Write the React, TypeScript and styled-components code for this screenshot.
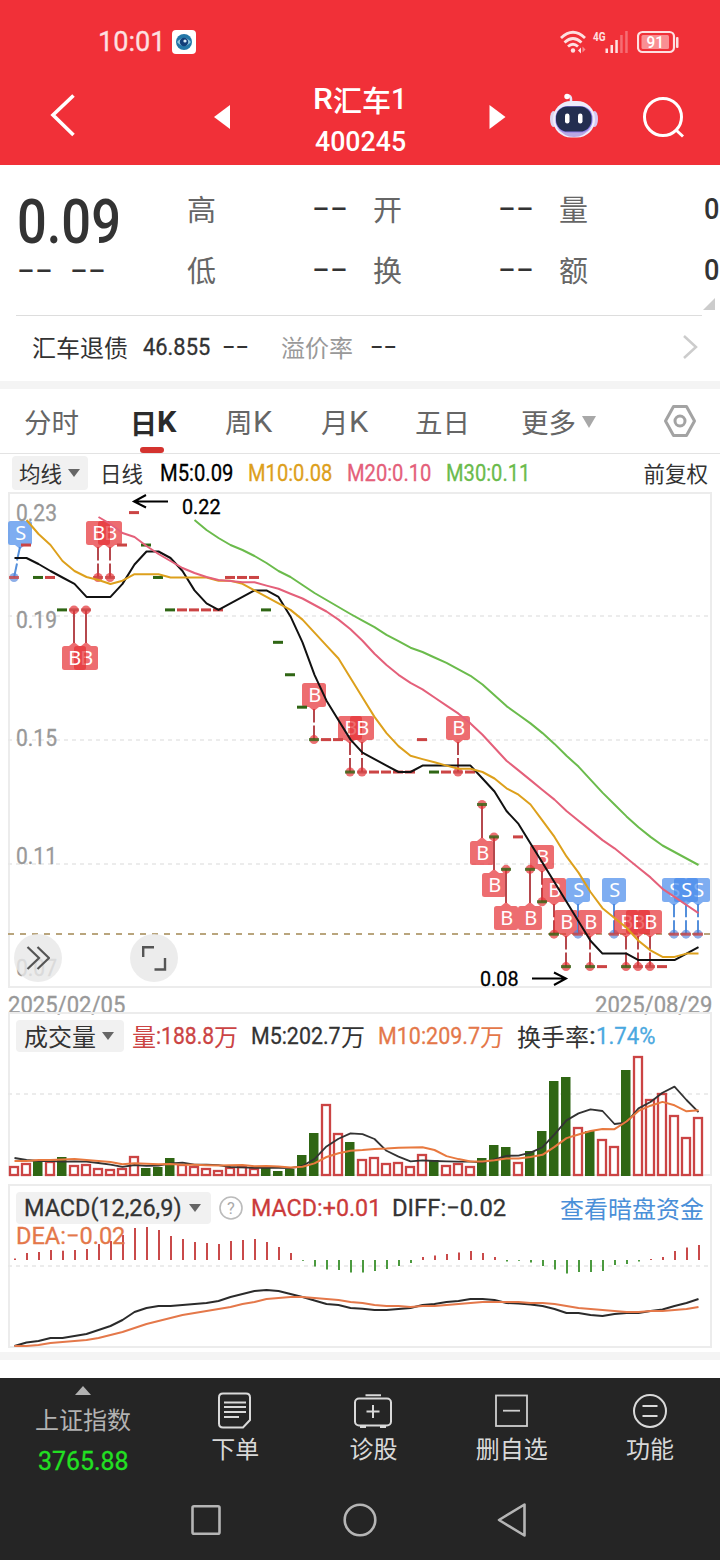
import React, { useLayoutEffect, useRef, useState } from "react";
import styled, { createGlobalStyle } from "styled-components";

const FONT = `Roboto, "Noto Sans CJK SC", sans-serif`;

const GlobalStyle = createGlobalStyle`
  html, body { margin: 0; padding: 0; background: #fff; }
  body { width: 720px; height: 1560px; overflow: hidden; font-family: ${FONT}; }
  * { box-sizing: border-box; }
  svg { display: block; }
`;

/* ---------- text primitives ---------- */

const FitBox = styled.span<{ $w: number; $size: number; $color?: string; $weight?: number }>`
  display: inline-block;
  flex: none;
  width: ${(p) => p.$w}px;
  font-size: ${(p) => p.$size}px;
  font-weight: ${(p) => p.$weight ?? 400};
  -webkit-text-stroke: ${(p) => (p.$weight ? 0 : 0.3)}px currentColor;
  color: ${(p) => p.$color ?? "inherit"};
  line-height: 1;
  white-space: nowrap;
`;

const FitInner = styled.span`
  display: inline-block;
  transform-origin: 0 50%;
`;

type FitProps = { w: number; size: number; color?: string; weight?: number; children: React.ReactNode };

/* Condenses its text horizontally so that it takes exactly w pixels. */
function Fit({ w, size, color, weight, children }: FitProps) {
  const ref = useRef<HTMLSpanElement>(null);
  const [scale, setScale] = useState(1);
  useLayoutEffect(() => {
    if (ref.current) setScale(w / ref.current.offsetWidth);
  }, [w, size]);
  return (
    <FitBox $w={w} $size={size} $color={color} $weight={weight}>
      <FitInner ref={ref} style={{ transform: `scaleX(${scale})` }}>
        {children}
      </FitInner>
    </FitBox>
  );
}

const Han = styled.span<{ $size: number; $color?: string; $weight?: number }>`
  flex: none;
  font-family: "Noto Sans CJK SC", sans-serif;
  font-size: ${(p) => p.$size}px;
  font-weight: ${(p) => p.$weight ?? 400};
  color: ${(p) => p.$color ?? "inherit"};
  line-height: 1;
  white-space: nowrap;
`;

const DashBox = styled.span<{ $w: number; $size: number }>`
  flex: none;
  width: ${(p) => p.$w}px;
  height: ${(p) => p.$size}px;
  font-family: "Liberation Sans", sans-serif;
  font-size: ${(p) => p.$size}px;
  line-height: 0.8;
  color: #333;
  white-space: nowrap;
  span {
    display: inline-block;
    transform: scaleX(1.68);
    transform-origin: 0 50%;
  }
`;

const Dashes = ({ w = 36, size = 32 }: { w?: number; size?: number }) => (
  <DashBox $w={w} $size={size}>
    <span>--</span>
  </DashBox>
);

/* ---------- layout ---------- */

const Page = styled.div`
  display: flex;
  flex-direction: column;
  width: 720px;
  height: 1560px;
  background: #fff;
  color: #333;
`;

const Header = styled.header`
  flex: none;
  height: 165px;
  background: #f13038;
  color: #fff;
`;

const StatusBar = styled.div`
  display: flex;
  justify-content: space-between;
  align-items: center;
  height: 84px;
  padding: 0 40px 0 98px;
`;

const StatusGroup = styled.div`
  display: flex;
  align-items: center;
  gap: 7px;
`;

const TitleBar = styled.div`
  display: grid;
  grid-template-columns: 210px 24px 252px 24px 38px 54px 118px;
  align-items: center;
  height: 70px;
  margin-top: -8px;
`;

const TitleText = styled.div`
  display: flex;
  flex-direction: column;
  align-items: center;
  gap: 15px;
  padding-top: 8px;
`;

const TitleLine = styled.div`
  display: flex;
  align-items: center;
  height: 30px;
`;

const BackSlot = styled.div`
  padding-left: 48px;
`;
const SearchSlot = styled.div`
  padding-left: 40px;
`;

const Quote = styled.section`
  position: relative;
  flex: none;
  display: grid;
  grid-template-columns: 187px 186px 186px 161px;
  height: 150px;
  padding-top: 14px;
`;

const PriceBlock = styled.div`
  padding: 13px 0 0 17px;
`;

const ChangeRow = styled.div`
  display: flex;
  gap: 17px;
  margin-top: 3px;
`;

const StatCol = styled.div`
  display: flex;
  flex-direction: column;
`;

const Stat = styled.div<{ $pad?: number }>`
  display: flex;
  justify-content: space-between;
  align-items: center;
  height: 61px;
  padding-right: ${(p) => p.$pad ?? 25}px;
  ${Han} {
    margin-top: -3px;
  }
`;

const Corner = styled.i`
  position: absolute;
  right: 5px;
  bottom: 5px;
  border-left: 12px solid transparent;
  border-bottom: 12px solid #ccc;
`;

const Rule = styled.div`
  flex: none;
  height: 1px;
  margin: 0 18px 0 16px;
  background: #ddd;
`;

const BondRow = styled.div`
  flex: none;
  display: flex;
  align-items: center;
  height: 65px;
  padding: 0 22px 3px 32px;
  ${Han} {
    margin-top: -1px;
  }
`;

const Space = styled.i<{ $w: number }>`
  flex: none;
  width: ${(p) => p.$w}px;
`;
const Grow = styled.i`
  flex: 1;
`;

const Band = styled.div<{ $h: number }>`
  flex: none;
  height: ${(p) => p.$h}px;
  background: #f4f4f4;
`;

const Tabs = styled.nav`
  flex: none;
  display: flex;
  height: 65px;
  padding-left: 24px;
  border-bottom: 1px solid #e3e3e3;
`;

const Tab = styled.div<{ $w: number; $active?: boolean }>`
  position: relative;
  flex: none;
  display: flex;
  align-items: center;
  width: ${(p) => p.$w}px;
  height: 66px;
  color: ${(p) => (p.$active ? "#2b2b2b" : "#666")};
`;

const Underline = styled.i`
  position: absolute;
  left: 10px;
  bottom: 2px;
  width: 24px;
  height: 6px;
  border-radius: 3px;
  background: #d4332f;
`;

const Caret = styled.i<{ $w?: number; $h?: number; $color?: string }>`
  flex: none;
  border: ${(p) => (p.$w ?? 12) / 2}px solid transparent;
  border-top: ${(p) => p.$h ?? 8}px solid ${(p) => p.$color ?? "#666"};
  border-bottom: 0;
`;

const LegendRow = styled.div`
  flex: none;
  display: flex;
  align-items: center;
  height: 38px;
  padding: 0 12px;
`;

const Chip = styled.div<{ $w: number; $h: number }>`
  flex: none;
  display: flex;
  align-items: center;
  justify-content: space-between;
  width: ${(p) => p.$w}px;
  height: ${(p) => p.$h}px;
  padding: ${(p) => (p.$w < 80 ? "0 8px 0 7px" : "0 10px 0 8px")};
  border-radius: 4px;
  background: #f1f1f1;
`;

const ChartPanel = styled.section<{ $h: number }>`
  position: relative;
  flex: none;
  height: ${(p) => p.$h}px;
`;

const PanelLegend = styled.div`
  position: absolute;
  top: 8px;
  left: 16px;
  right: 16px;
  display: flex;
  align-items: center;
`;

const SecondLegend = styled.div`
  position: absolute;
  top: 40px;
  left: 16px;
`;

const RoundButton = styled.button<{ $left: number }>`
  position: absolute;
  left: ${(p) => p.$left}px;
  top: 442px;
  display: grid;
  place-items: center;
  width: 48px;
  height: 48px;
  padding: 0;
  border: 0;
  border-radius: 50%;
  background: rgba(232, 232, 232, 0.82);
`;

const DateRow = styled.div`
  flex: none;
  display: flex;
  justify-content: space-between;
  align-items: center;
  height: 24px;
  padding: 10px 8px 0;
`;

const Gap = styled.div<{ $h: number }>`
  flex: none;
  height: ${(p) => p.$h}px;
`;

const BottomBar = styled.footer`
  flex: none;
  display: grid;
  grid-template-columns: 166px repeat(4, 138.3px);
  height: 102px;
  background: #252525;
  color: #d9d9d9;
`;

const IndexCell = styled.div`
  display: flex;
  flex-direction: column;
  align-items: center;
  padding-top: 8px;
  color: #b2b2b2;
`;

const UpCaret = styled.i`
  border: 8px solid transparent;
  border-top: 0;
  border-bottom: 9px solid #b2b2b2;
  margin-bottom: 12px;
`;

const Action = styled.div`
  display: flex;
  flex-direction: column;
  align-items: center;
  gap: 7px;
  padding-top: 13px;
`;

const NavBar = styled.div`
  flex: 1;
  display: flex;
  justify-content: center;
  align-items: center;
  gap: 112px;
  background: #252525;
`;

/* ---------- chart data ---------- */

const X = (i: number) => 14 + 12 * i;

const closes = [
  20, 21, 20, 20, 19, 19, 19, 20, 20, 21, 22, 21, 20, 19, 19, 19, 19, 19, 20, 20, 20, 19, 18, 17, 16, 15, 15, 15, 14,
  14, 14, 14, 14, 14, 15, 14, 14, 14, 14, 13, 12, 11, 12, 11, 10, 9, 8, 9, 8, 8, 9, 8, 8, 8, 8, 9, 9, 9,
];
const fallDays = new Set([2, 4, 11, 12, 13, 21, 22, 23, 24, 25, 28, 35, 39, 40, 41, 43, 44, 45, 46, 48, 51]);

const PY = (p: number) => 512.6 + 32.43 * (22 - p);

function average(values: number[], n: number, from: number) {
  const out: number[] = [];
  for (let i = from; i < values.length; i++) {
    let s = 0;
    for (let k = 0; k < n; k++) s += values[i - k];
    out.push(s / n);
  }
  return out;
}

const line = (ys: number[], first = 0) =>
  ys.map((y, k) => `${X(first + k) + 0.5},${Math.round(y * 10) / 10}`).join(" ");

const ma5 = [558, 558, 564, 571, ...average(closes, 5, 4).map(PY)];
const ma10 = [520, 534, 545, 561, 571, 577, 580, 584, ...average(closes, 10, 9).map(PY)];
const ma20 = [517, 524, 533, 537, 546, 554, 561, 568, 573, 577, 580, 581, ...average(closes, 20, 19).map(PY)];
const ma30 = [520, 530, 538, 545, 550, 556, 563, 571, 577, 585, 593, 600, 607, 614, ...average(closes, 30, 29).map(PY)];

type Mark = { i: number; kind: "B" | "S"; below?: boolean };
const marks: Mark[] = [
  { i: 0, kind: "S" },
  { i: 6, kind: "B", below: true },
  { i: 5, kind: "B", below: true },
  { i: 8, kind: "B" },
  { i: 7, kind: "B" },
  { i: 25, kind: "B" },
  { i: 28, kind: "B" },
  { i: 29, kind: "B" },
  { i: 37, kind: "B" },
  { i: 39, kind: "B", below: true },
  { i: 40, kind: "B", below: true },
  { i: 41, kind: "B", below: true },
  { i: 43, kind: "B", below: true },
  { i: 44, kind: "B" },
  { i: 45, kind: "B" },
  { i: 46, kind: "B" },
  { i: 47, kind: "S" },
  { i: 48, kind: "B" },
  { i: 50, kind: "S" },
  { i: 51, kind: "B" },
  { i: 52, kind: "B" },
  { i: 53, kind: "B" },
  { i: 55, kind: "S" },
  { i: 57, kind: "S" },
  { i: 56, kind: "S" },
];
const markedDays = new Set(marks.map((m) => m.i));

const volTops = [
  1166, 1163, 1161, 1161, 1157, 1165, 1164, 1168, 1169, 1168, 1156, 1168, 1167, 1158, 1164, 1166, 1168, 1170, 1167,
  1166, 1168, 1167, 1171, 1169, 1155, 1133, 1104, 1133, 1142, 1159, 1157, 1163, 1162, 1166, 1154, 1160, 1165, 1163,
  1166, 1158, 1145, 1147, 1162, 1151, 1131, 1081, 1077, 1127, 1131, 1139, 1146, 1070, 1056, 1099, 1093, 1115, 1137,
  1117,
];
const vol5 = [1158, 1160, 1161, 1161, ...average(volTops, 5, 4)];
const vol10 = [1161, 1161, 1160, 1160, 1159.5, 1159, 1160, 1161, 1162, ...average(volTops, 10, 9)];

const macd = [
  1.5, 7, 8, 10, 9.3, 10, 11, 16, 19, 25, 32, 33, 30, 24, 21, 18, 17, 16, 19, 20, 21, 18, 13, 7, -0.8, -6.5, -9.5,
  -10, -12.5, -12.5, -11, -9, -6, -3, 3, 4.5, 6, 7.5, 9, 7, 3, -1.5, -0.8, -2.5, -6, -9.5, -13.5, -12, -12, -11, -5,
  -4, -1.5, 1, 3, 9, 12.5, 15,
];
const diff = [
  1346, 1342.5, 1341, 1338, 1338, 1336, 1334, 1330, 1326, 1320, 1312, 1308, 1306, 1306, 1305, 1304, 1303, 1301, 1297,
  1294, 1291, 1290, 1291, 1294, 1297, 1300.5, 1304, 1305, 1308, 1308.7, 1310, 1310, 1309, 1308, 1305, 1304, 1302,
  1301, 1299, 1299, 1300, 1303, 1303.5, 1304.5, 1306, 1309, 1313, 1313, 1315, 1316, 1314, 1313, 1313, 1311, 1309.5,
  1306, 1303, 1299,
];
const dea = [
  1346, 1346, 1345, 1343, 1342, 1341, 1340, 1338, 1335, 1332, 1328, 1324, 1321, 1318, 1315, 1313, 1311, 1309, 1307,
  1304, 1302, 1299, 1298, 1297, 1297, 1298, 1299, 1300, 1302, 1303, 1305, 1306, 1306, 1307, 1306, 1306, 1305, 1304,
  1303, 1302, 1302, 1302, 1302, 1303, 1303, 1304, 1306, 1308, 1309, 1310, 1311, 1312, 1312, 1311, 1311, 1310, 1309,
  1307,
];

const RED = "#cb4444";
const GREEN = "#2f6614";

const Frame = ({ y, h }: { y: number; h: number }) => (
  <rect x={9} y={y} width={702} height={h} fill="none" stroke="#ececec" strokeWidth={2} />
);
const GridLine = ({ y }: { y: number }) => (
  <line x1={8} x2={710} y1={y} y2={y} stroke="#e6e6e6" strokeWidth={1.6} strokeDasharray="4 4" />
);
const Curve = ({ pts, color, w = 2 }: { pts: string; color: string; w?: number }) => (
  <polyline points={pts} fill="none" stroke={color} strokeWidth={w} strokeLinejoin="round" />
);

function Marker({ i, kind, below }: Mark) {
  const x = X(i);
  const cx = Math.max(x, 20);
  const y = PY(closes[i]);
  const top = Math.round(below ? y + 36.5 : y - 56.5);
  const fill = kind === "B" ? "rgba(230,50,54,.71)" : "rgba(68,136,234,.69)";
  const stem = kind === "B" ? "#b5484d" : "#5590dc";
  return (
    <g>
      {below ? (
        <line x1={x} x2={x} y1={y} y2={top - 3} stroke={stem} strokeWidth={2} />
      ) : (
        <>
          <line x1={cx} x2={(cx + x) / 2} y1={top + 26} y2={y - 17} stroke={stem} strokeWidth={2} />
          <line x1={(cx + x) / 2} x2={x} y1={y - 14} y2={y} stroke={stem} strokeWidth={2} />
        </>
      )}
      <circle cx={x} cy={y} r={4.5} fill={kind === "B" ? "rgba(228,50,54,.7)" : "rgba(80,130,220,.65)"} />
      <rect x={cx - 12} y={top} width={24} height={24} rx={2.5} fill={fill} />
      <path
        d={below ? `M${cx - 5} ${top}l5 -4l5 4z` : `M${cx - 5} ${top + 24}l5 4l5 -4z`}
        fill={fill}
      />
      <text x={cx + 0.7} y={top + 19} fontSize={20} fill="#fff" textAnchor="middle" fontFamily={`"Noto Sans", sans-serif`}>
        {kind}
      </text>
    </g>
  );
}

const PriceLabel = ({ x = 16, y, w = 41, size = 23, color = "#999", children }: any) => (
  <text
    x={x}
    y={y}
    fontSize={size}
    fill={color}
    stroke={color}
    strokeWidth={0.3}
    textLength={w}
    lengthAdjust="spacingAndGlyphs"
    fontFamily="Roboto"
  >
    {children}
  </text>
);

const PriceChart = () => (
  <svg width={720} height={496} viewBox="0 492 720 496">
    <Frame y={493} h={494} />
    <GridLine y={616} />
    <GridLine y={740} />
    <GridLine y={864} />
    <PriceLabel y={521}>0.23</PriceLabel>
    <PriceLabel y={628}>0.19</PriceLabel>
    <PriceLabel y={746}>0.15</PriceLabel>
    <PriceLabel y={864}>0.11</PriceLabel>
    <PriceLabel y={976}>0.07</PriceLabel>
    <line x1={8} x2={711} y1={934} y2={934} stroke="#b9a57d" strokeWidth={1.8} strokeDasharray="6 6" />
    {marks.map((m) => (
      <Marker key={m.i} {...m} />
    ))}
    {closes.map((c, i) => (
      <rect
        key={i}
        x={X(i) - 5}
        y={PY(c) - 1.5}
        width={10}
        height={3}
        fill={fallDays.has(i) ? GREEN : RED}
        opacity={markedDays.has(i) ? 0.8 : 1}
      />
    ))}
    <Curve pts={line(ma5)} color="#111" />
    <Curve pts={line(ma10, 1)} color="#dda01c" />
    <Curve pts={line(ma20, 7)} color="#e4607a" />
    <Curve pts={line(ma30, 15)} color="#6bbb4c" />
    <g fill="none" stroke="#000" strokeWidth={2}>
      <path d="M168 501.5H134M146 495l-12 6.5l12 6" />
      <path d="M532 978.5h34M554 972.5l12 6l-12 6.5" />
    </g>
    <PriceLabel x={182} y={514} w={38.5} size={20} color="#000">0.22</PriceLabel>
    <PriceLabel x={480} y={985.5} w={38.5} size={20} color="#000">0.08</PriceLabel>
  </svg>
);

const VolumeChart = () => (
  <svg width={720} height={166} viewBox="0 1012 720 166">
    <Frame y={1013} h={162} />
    <GridLine y={1094} />
    {volTops.map((t, i) =>
      fallDays.has(i) ? (
        <rect key={i} x={X(i) - 5} y={t} width={9.5} height={1176 - t} fill={GREEN} />
      ) : (
        <rect key={i} x={X(i) - 4} y={t + 1} width={8} height={1174 - t} fill="#fff" stroke={RED} strokeWidth={2.3} />
      )
    )}
    <Curve pts={line(vol5)} color="#333" w={1.8} />
    <Curve pts={line(vol10)} color="#e8793f" />
  </svg>
);

const MacdChart = () => (
  <svg width={720} height={164} viewBox="0 1184 720 164">
    <Frame y={1185} h={162} />
    <GridLine y={1266} />
    {macd.map((v, i) => (
      <rect
        key={i}
        x={X(i)}
        y={v > 0 ? 1260 - v : 1260}
        width={2}
        height={Math.abs(v)}
        fill={v > 0 ? "#c94a4a" : "#4c9a3f"}
      />
    ))}
    <Curve pts={line(diff)} color="#2b2b2b" />
    <Curve pts={line(dea)} color="#e4784a" />
  </svg>
);

/* ---------- icons ---------- */

const EyeAppIcon = () => (
  <svg width="24" height="24" viewBox="0 0 24 24">
    <rect width="24" height="24" rx="4" fill="#fff" />
    <circle cx="12" cy="12" r="8" fill="#2377a8" />
    <path d="M5 12q7-8 14 0q-7 8-14 0z" fill="#8fc4dc" />
    <circle cx="12" cy="12" r="4.2" fill="#123f7a" />
    <circle cx="13" cy="11" r="1.6" fill="#d9edf7" />
  </svg>
);

const WifiIcon = () => (
  <svg width="26" height="24" viewBox="0 0 26 24" fill="none" stroke="#fde0e1" strokeWidth="2.8">
    <path d="M1 8Q13 -3.500 25 8" />
    <path d="M4.500 12.500Q13 4.500 21.500 12.500" />
    <path d="M8 16.500Q13 12 18 16.500" />
    <circle cx="13" cy="20.500" r="2.200" fill="#fde0e1" stroke="none" />
    <path d="M21 17.500v6l-3-3z" fill="#fde0e1" stroke="none" />
    <path d="M22.500 16.500v6l3-3z" fill="#f78b8f" stroke="none" />
  </svg>
);

const SignalIcon = () => (
  <svg width="37" height="24" viewBox="0 0 37 24" fill="#fde0e1" overflow="visible">
    <text x="0" y="10.500" fontSize="13" fontWeight="700" fontFamily="Roboto" textLength="12.5" lengthAdjust="spacingAndGlyphs">
      4G
    </text>
    <rect x="12.500" y="18.500" width="2.500" height="4.500" />
    <rect x="17.500" y="15" width="2.500" height="8" />
    <rect x="22.300" y="10" width="2.500" height="13" />
    <rect x="27.200" y="5" width="2.500" height="18" opacity=".35" />
    <rect x="32.200" y="1" width="2.500" height="22" opacity=".35" />
  </svg>
);

const BatteryIcon = () => (
  <svg width="43" height="24" viewBox="0 0 43 24">
    <rect x="1" y="2" width="36" height="20" rx="4.500" fill="none" stroke="#fde0e1" strokeWidth="2.200" />
    <rect x="4.500" y="5" width="27.500" height="14" rx="1.500" fill="#f98f93" />
    <rect x="39" y="7" width="2.500" height="11" rx="1" fill="#fde0e1" />
    <text x="9.500" y="18" fontSize="17" fontWeight="500" fill="#fff" fontFamily="Roboto" textLength="17.500" lengthAdjust="spacingAndGlyphs">
      91
    </text>
  </svg>
);

const RobotIcon = () => (
  <svg width="52" height="46" viewBox="0 0 52 46">
    <path d="M23 10V6q0-3-3-3.500" stroke="#e9e4f6" strokeWidth="2.500" fill="none" />
    <circle cx="19" cy="3.500" r="2.700" fill="#fff" />
    <ellipse cx="5.500" cy="26" rx="3.500" ry="8" fill="#dcd5f0" />
    <ellipse cx="46.500" cy="26" rx="3.500" ry="8" fill="#d5c8f2" />
    <rect x="5" y="8" width="42" height="36.500" rx="18" fill="#efecfa" />
    <path d="M8 34q8 10 18 10t18-10q-4 5-18 5t-18-5z" fill="#b9a8e4" />
    <rect x="7.500" y="13" width="37" height="26.500" rx="12" fill="#8d7be8" />
    <rect x="8" y="13.500" width="35.500" height="25" rx="11.500" fill="#232e50" />
    <rect x="17" y="20.500" width="4.500" height="10" rx="2.200" fill="#fff" />
    <rect x="30" y="20.500" width="4.500" height="10" rx="2.200" fill="#fff" />
  </svg>
);

const DocIcon = () => (
  <svg width="36" height="38" viewBox="0 0 36 38" fill="none" stroke="#d9d9d9" strokeWidth="2">
    <path d="M6 2.500H29Q33 2.500 33 6.500V29L26 36.500H6Q2 36.500 2 32.500V6.500Q2 2.500 6 2.500Z" />
    <path d="M7 11.500H29M7 16H29M7 21H29M7 26H22" />
  </svg>
);

const KitIcon = () => (
  <svg width="40" height="38" viewBox="0 0 40 38" fill="none" stroke="#d9d9d9" strokeWidth="2">
    <rect x="2" y="7.500" width="36" height="27" rx="4" />
    <path d="M12.500 4.300H28M20 14V27M13.500 20.500H26.500M7 36H13M27 36H33" />
  </svg>
);

const MinusBoxIcon = () => (
  <svg width="34" height="38" viewBox="0 0 34 38" fill="none" stroke="#cfcfcf" strokeWidth="1.800">
    <rect x="1" y="4.500" width="31" height="30.500" />
    <path d="M8 19.700H25" />
  </svg>
);

const EqualCircleIcon = () => (
  <svg width="36" height="38" viewBox="0 0 36 38" fill="none" stroke="#d9d9d9" strokeWidth="2">
    <circle cx="18" cy="20" r="16" />
    <path d="M10.500 15H25.500M10.500 25H25.500" />
  </svg>
);

const HexIcon = () => (
  <svg width="34" height="34" viewBox="0 0 34 34" fill="none" stroke="#a3a3a3" strokeWidth="3" strokeLinejoin="round">
    <path d="M10.500 2.500H23.500L31.500 17L23.500 31.500H10.500L2.500 17Z" />
    <circle cx="17" cy="17" r="5" />
  </svg>
);

const HexSlot = styled.div`
  display: flex;
  align-items: center;
  height: 64px;
`;

/* ---------- page ---------- */

export default function App() {
  return (
    <Page>
      <GlobalStyle />
      <Header>
        <StatusBar>
          <StatusGroup>
            <Fit w={67} size={27.5} color="#fde0e1">10:01</Fit>
            <EyeAppIcon />
          </StatusGroup>
          <StatusGroup>
            <WifiIcon />
            <SignalIcon />
            <BatteryIcon />
          </StatusGroup>
        </StatusBar>
        <TitleBar>
          <BackSlot>
            <svg width="30" height="46" viewBox="0 0 30 46">
              <path d="M25.500 2.500L5 22L25.500 42" fill="none" stroke="#fff" strokeWidth="3.600" />
            </svg>
          </BackSlot>
          <svg width="24" height="26" viewBox="0 0 24 26">
            <path d="M4 14L20 2V26Z" fill="#fff" />
          </svg>
          <TitleText>
            <TitleLine>
              <Fit w={20} size={30} weight={500}>R</Fit>
              <Han $size={29} $weight={500}>汇车</Han>
              <Fit w={16} size={30} weight={500}>1</Fit>
            </TitleLine>
            <Fit w={91} size={27} weight={500}>400245</Fit>
          </TitleText>
          <svg width="24" height="26" viewBox="0 0 24 26">
            <path d="M19.500 14L3.500 2V26Z" fill="#fff" />
          </svg>
          <i />
          <RobotIcon />
          <SearchSlot>
            <svg width="44" height="44" viewBox="0 0 44 44" fill="none" stroke="#fff" strokeWidth="3">
              <circle cx="21" cy="23" r="18.500" />
              <path d="M33.500 35.500L41 42.500" />
            </svg>
          </SearchSlot>
        </TitleBar>
      </Header>

      <Quote>
        <PriceBlock>
          <Fit w={104} size={61} weight={500}>0.09</Fit>
          <ChangeRow>
            <Dashes />
            <Dashes />
          </ChangeRow>
        </PriceBlock>
        <StatCol>
          <Stat><Han $size={29} $color="#666">高</Han><Dashes /></Stat>
          <Stat><Han $size={29} $color="#666">低</Han><Dashes /></Stat>
        </StatCol>
        <StatCol>
          <Stat><Han $size={29} $color="#666">开</Han><Dashes /></Stat>
          <Stat><Han $size={29} $color="#666">换</Han><Dashes /></Stat>
        </StatCol>
        <StatCol>
          <Stat $pad={1}><Han $size={29} $color="#666">量</Han><Fit w={15} size={29} weight={500}>0</Fit></Stat>
          <Stat $pad={1}><Han $size={29} $color="#666">额</Han><Fit w={15} size={29} weight={500}>0</Fit></Stat>
        </StatCol>
        <Corner />
      </Quote>
      <Rule />
      <BondRow>
        <Han $size={24}>汇车退债</Han>
        <Space $w={15} />
        <Fit w={67} size={24.5}>46.855</Fit>
        <Space $w={12} />
        <Dashes w={28} size={24} />
        <Space $w={31} />
        <Han $size={24} $color="#999">溢价率</Han>
        <Space $w={17} />
        <Dashes w={28} size={24} />
        <Grow />
        <svg width="16" height="26" viewBox="0 0 16 26">
          <path d="M2 2L14 13L2 24" fill="none" stroke="#ccc" strokeWidth="2.500" />
        </svg>
      </BondRow>
      <Band $h={8} />

      <Tabs>
        <Tab $w={106}><Han $size={27.5}>分时</Han></Tab>
        <Tab $w={95} $active>
          <Han $size={27} $weight={700}>日</Han>
          <Fit w={19} size={29} weight={700}>K</Fit>
          <Underline />
        </Tab>
        <Tab $w={96}><Han $size={27.5}>周</Han><Fit w={19} size={29} weight={400}>K</Fit></Tab>
        <Tab $w={94}><Han $size={27.5}>月</Han><Fit w={19} size={29} weight={400}>K</Fit></Tab>
        <Tab $w={106}><Han $size={27.5}>五日</Han></Tab>
        <Tab $w={142}>
          <Han $size={27.5}>更多</Han>
          <Space $w={6} />
          <Caret $w={15} $h={12} $color="#a8a8a8" />
        </Tab>
        <HexSlot><HexIcon /></HexSlot>
      </Tabs>

      <LegendRow>
        <Chip $w={76} $h={34}>
          <Han $size={21.5}>均线</Han>
          <Caret />
        </Chip>
        <Space $w={12} />
        <Han $size={21.5}>日线</Han>
        <Space $w={17} />
        <Fit w={73} size={23} color="#000">M5:0.09</Fit>
        <Space $w={15} />
        <Fit w={84} size={23} color="#dda01c">M10:0.08</Fit>
        <Space $w={15} />
        <Fit w={84} size={23} color="#e4607a">M20:0.10</Fit>
        <Space $w={15} />
        <Fit w={84} size={23} color="#6bbb4c">M30:0.11</Fit>
        <Grow />
        <Han $size={21.5}>前复权</Han>
      </LegendRow>

      <ChartPanel $h={496}>
        <PriceChart />
        <RoundButton $left={14}>
          <svg width="24" height="26" viewBox="0 0 24 26" fill="none" stroke="#555" strokeWidth="2.200">
            <path d="M1.500 2L13 13L1.500 24M11.500 2L23 13L11.500 24" />
          </svg>
        </RoundButton>
        <RoundButton $left={130}>
          <svg width="26" height="26" viewBox="0 0 26 26" fill="none" stroke="#555" strokeWidth="2.400">
            <path d="M2.200 12V2.200H13M24 13V24.500H13.500" />
          </svg>
        </RoundButton>
      </ChartPanel>

      <DateRow>
        <Fit w={117} size={23} color="#999">2025/02/05</Fit>
        <Fit w={117} size={23} color="#999">2025/08/29</Fit>
      </DateRow>

      <ChartPanel $h={172}>
        <VolumeChart />
        <PanelLegend>
          <Chip $w={108} $h={32}>
            <Han $size={24}>成交量</Han>
            <Caret />
          </Chip>
          <Space $w={8} />
          <Han $size={24} $color={RED}>量</Han>
          <Fit w={58} size={24} color={RED}>:188.8</Fit>
          <Han $size={24} $color={RED}>万</Han>
          <Space $w={13} />
          <Fit w={90} size={24}>M5:202.7</Fit>
          <Han $size={24}>万</Han>
          <Space $w={13} />
          <Fit w={102} size={24} color="#e4784a">M10:209.7</Fit>
          <Han $size={24} $color="#e4784a">万</Han>
          <Space $w={13} />
          <Han $size={24}>换手率</Han>
          <Fit w={7} size={24}>:</Fit>
          <Fit w={59} size={24} color="#4aa8e0">1.74%</Fit>
        </PanelLegend>
      </ChartPanel>

      <ChartPanel $h={164}>
        <MacdChart />
        <PanelLegend>
          <Chip $w={195} $h={32}>
            <Fit w={158} size={24}>MACD(12,26,9)</Fit>
            <Caret />
          </Chip>
          <Space $w={8} />
          <svg width="24" height="24" viewBox="0 0 24 24">
            <circle cx="12" cy="12" r="11" fill="none" stroke="#bbb" strokeWidth="1.600" />
            <text x="12" y="18" fontSize="16.500" textAnchor="middle" fill="#aaa" fontFamily="Roboto">?</text>
          </svg>
          <Space $w={8} />
          <Fit w={130} size={24} color="#cb3b3b">MACD:+0.01</Fit>
          <Space $w={11} />
          <Fit w={114} size={24}>DIFF:−0.02</Fit>
          <Grow />
          <Han $size={24} $color="#4a8fd8">查看暗盘资金</Han>
        </PanelLegend>
        <SecondLegend>
          <Fit w={109} size={24} color="#e4784a">DEA:−0.02</Fit>
        </SecondLegend>
      </ChartPanel>

      <Gap $h={4} />
      <Band $h={8} />
      <Gap $h={18} />

      <BottomBar>
        <IndexCell>
          <UpCaret />
          <Han $size={24}>上证指数</Han>
          <Gap $h={17} />
          <Fit w={91} size={26} color="#22e022">3765.88</Fit>
        </IndexCell>
        <Action><DocIcon /><Han $size={24}>下单</Han></Action>
        <Action><KitIcon /><Han $size={24}>诊股</Han></Action>
        <Action><MinusBoxIcon /><Han $size={24}>删自选</Han></Action>
        <Action><EqualCircleIcon /><Han $size={24}>功能</Han></Action>
      </BottomBar>
      <NavBar>
        <svg width="40" height="40" viewBox="0 0 40 40" fill="none" stroke="#b5b5b5" strokeWidth="2.600">
          <rect x="4.500" y="6.300" width="27" height="27.500" rx="1.500" />
        </svg>
        <svg width="40" height="40" viewBox="0 0 40 40" fill="none" stroke="#b5b5b5" strokeWidth="2.600">
          <circle cx="20" cy="20" r="15.300" />
        </svg>
        <svg width="40" height="40" viewBox="0 0 40 40" fill="none" stroke="#b5b5b5" strokeWidth="2.600" strokeLinejoin="round">
          <path d="M7 20L32.500 4.500V35.500Z" />
        </svg>
      </NavBar>
    </Page>
  );
}
